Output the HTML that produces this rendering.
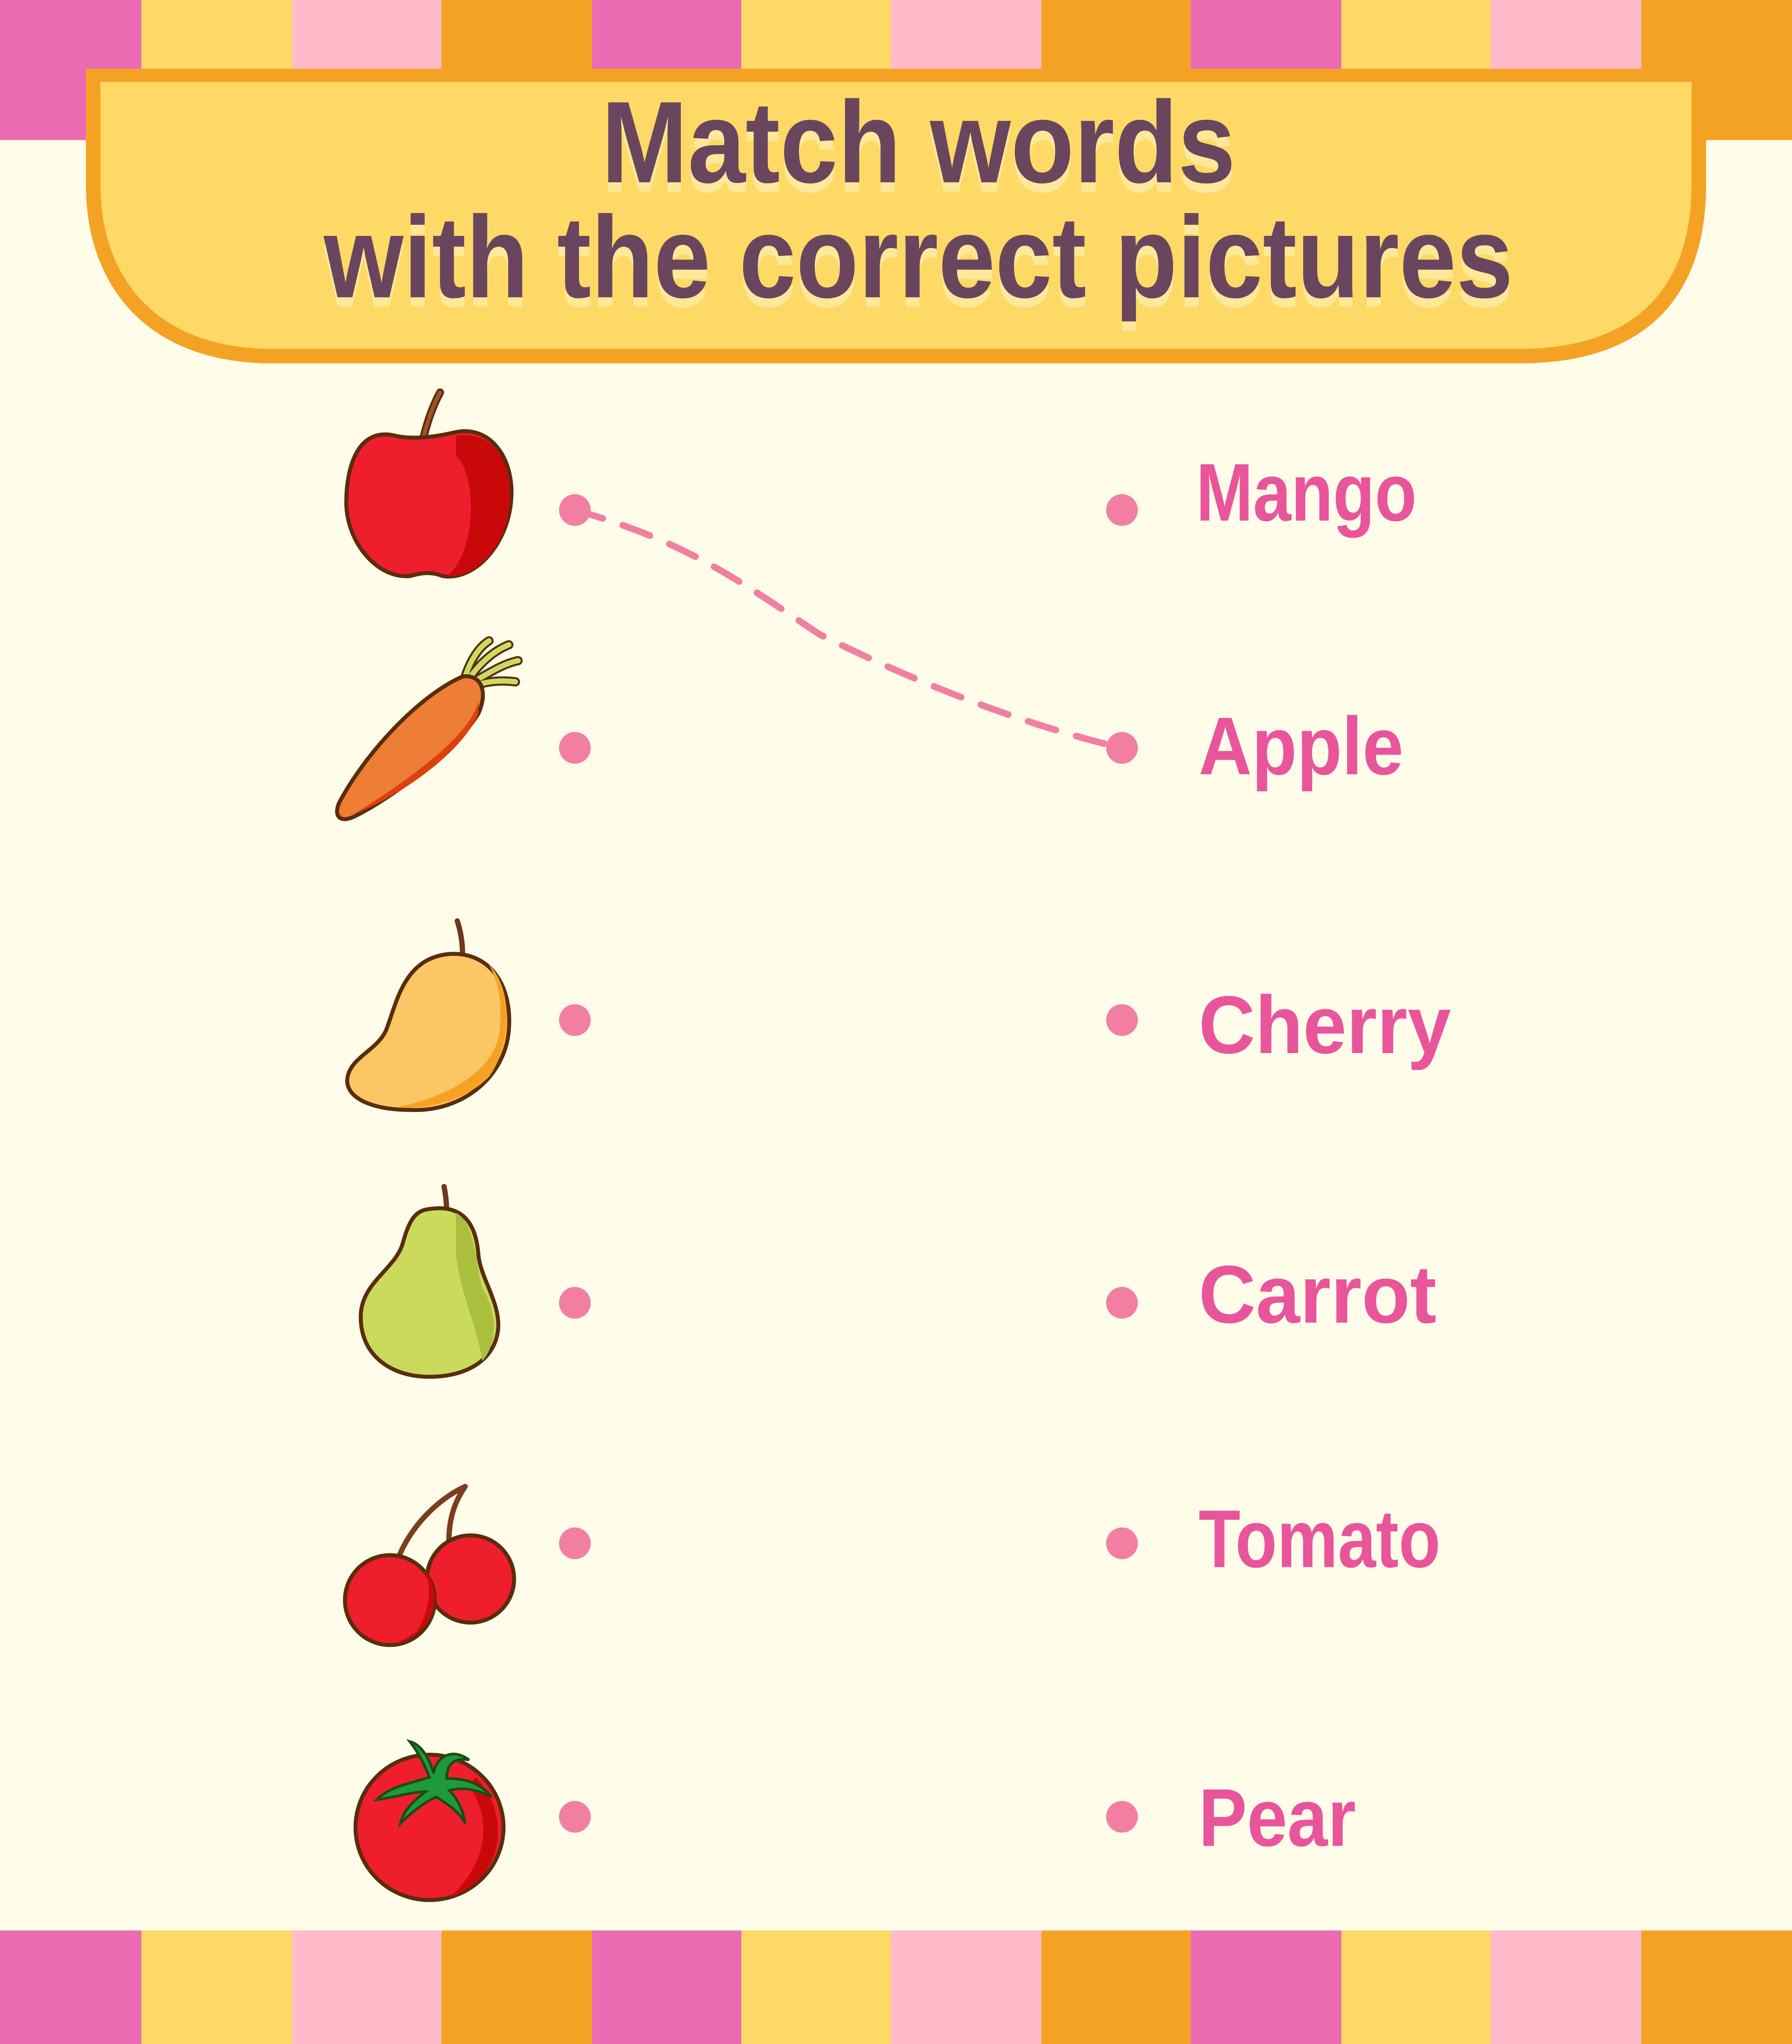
<!DOCTYPE html>
<html><head><meta charset="utf-8"><style>
html,body{margin:0;padding:0;background:#FFFCE9;width:4383px;height:5070px;overflow:hidden;}
svg{display:block}
text{font-family:"Liberation Sans",sans-serif;font-weight:bold}
</style></head><body>
<svg width="4383" height="5070" viewBox="0 0 1356 1568.6" xmlns="http://www.w3.org/2000/svg">
<rect width="1356" height="1568.6" fill="#FFFCE9"/>
<g>
<rect x="0" y="0" width="107" height="106" fill="#EA6BB2"/>
<rect x="107" y="0" width="114" height="106" fill="#FFD966"/>
<rect x="221" y="0" width="113" height="106" fill="#FFBBC9"/>
<rect x="334" y="0" width="114" height="106" fill="#F4A224"/>
<rect x="448" y="0" width="113" height="106" fill="#EA6BB2"/>
<rect x="561" y="0" width="113" height="106" fill="#FFD966"/>
<rect x="674" y="0" width="114" height="106" fill="#FFBBC9"/>
<rect x="788" y="0" width="113" height="106" fill="#F4A224"/>
<rect x="901" y="0" width="114" height="106" fill="#EA6BB2"/>
<rect x="1015" y="0" width="113" height="106" fill="#FFD966"/>
<rect x="1128" y="0" width="114" height="106" fill="#FFBBC9"/>
<rect x="1242" y="0" width="114" height="106" fill="#F4A224"/>
</g>
<g transform="translate(0,1461)">
<rect x="0" y="0" width="107" height="108" fill="#EA6BB2"/>
<rect x="107" y="0" width="114" height="108" fill="#FFD966"/>
<rect x="221" y="0" width="113" height="108" fill="#FFBBC9"/>
<rect x="334" y="0" width="114" height="108" fill="#F4A224"/>
<rect x="448" y="0" width="113" height="108" fill="#EA6BB2"/>
<rect x="561" y="0" width="113" height="108" fill="#FFD966"/>
<rect x="674" y="0" width="114" height="108" fill="#FFBBC9"/>
<rect x="788" y="0" width="113" height="108" fill="#F4A224"/>
<rect x="901" y="0" width="114" height="108" fill="#EA6BB2"/>
<rect x="1015" y="0" width="113" height="108" fill="#FFD966"/>
<rect x="1128" y="0" width="114" height="108" fill="#FFBBC9"/>
<rect x="1242" y="0" width="114" height="108" fill="#F4A224"/>
</g>
<path d="M65,52 H1291 V140 C1291,220 1250,275 1150,275 H206 C110,275 65,215 65,140 Z" fill="#F4A224"/>
<path d="M76,62 H1280 V140 C1280,210 1245,264 1150,264 H206 C118,264 76,210 76,140 Z" fill="#FFD966"/>
<g fill="#FFE89A">
<text x="455" y="145" font-size="88" textLength="480" lengthAdjust="spacingAndGlyphs">Match words</text>
<text x="245" y="232" font-size="88" textLength="900" lengthAdjust="spacingAndGlyphs">with the correct pictures</text>
</g>
<g fill="#69465E">
<text x="455" y="138" font-size="88" textLength="480" lengthAdjust="spacingAndGlyphs">Match words</text>
<text x="245" y="225" font-size="88" textLength="900" lengthAdjust="spacingAndGlyphs">with the correct pictures</text>
</g>
<path d="M435,386 C520,410 560,440 620,480 C700,520 780,550 849,566" fill="none" stroke="#F07FA0" stroke-width="5" stroke-dasharray="22 16" stroke-linecap="round"/>
<g fill="#F27FA2">
<circle cx="435" cy="386" r="12"/><circle cx="849" cy="386" r="12"/>
<circle cx="435" cy="566" r="12"/><circle cx="849" cy="566" r="12"/>
<circle cx="435" cy="772" r="12"/><circle cx="849" cy="772" r="12"/>
<circle cx="435" cy="986" r="12"/><circle cx="849" cy="986" r="12"/>
<circle cx="435" cy="1168" r="12"/><circle cx="849" cy="1168" r="12"/>
<circle cx="435" cy="1375" r="12"/><circle cx="849" cy="1375" r="12"/>
</g>
<g fill="#E9559B" font-size="62">
<text x="905" y="394" textLength="167" lengthAdjust="spacingAndGlyphs">Mango</text>
<text x="907" y="586" textLength="155" lengthAdjust="spacingAndGlyphs">Apple</text>
<text x="907" y="797" textLength="191" lengthAdjust="spacingAndGlyphs">Cherry</text>
<text x="907" y="1001" textLength="180" lengthAdjust="spacingAndGlyphs">Carrot</text>
<text x="907" y="1186" textLength="183" lengthAdjust="spacingAndGlyphs">Tomato</text>
<text x="907" y="1397" textLength="119" lengthAdjust="spacingAndGlyphs">Pear</text>
</g>
<path d="M318,342 C322,322 327,308 333,297" stroke="#5A2D0C" stroke-width="6" fill="none" stroke-linecap="round"/>
<path d="M318,342 C322,322 327,308 333,297" stroke="#A0522D" stroke-width="3" fill="none" stroke-linecap="round"/>
<path d="M300,330 C270,322 262,355 262,380 C262,410 285,438 310,436 C318,434 325,432 335,436 C360,440 386,410 387,375 C388,345 370,322 345,327 C332,330 315,333 300,330 Z" fill="#EE1E2C" stroke="#5A2D0C" stroke-width="3"/>
<path d="M345,330 C370,325 386,345 386,375 C386,410 362,438 338,436 C360,420 362,360 345,345 Z" fill="#C90909"/>
<path d="M352,512 C356,500 362,490 370,485 M356,512 C365,500 375,492 385,488 M360,515 C372,508 382,502 392,500 M362,518 C372,515 382,515 390,516" stroke="#5A2D0C" stroke-width="7" fill="none" stroke-linecap="round"/>
<path d="M352,512 C356,500 362,490 370,485 M356,512 C365,500 375,492 385,488 M360,515 C372,508 382,502 392,500 M362,518 C372,515 382,515 390,516" stroke="#CADB63" stroke-width="4" fill="none" stroke-linecap="round"/>
<path d="M350,512 C363,510 370,522 362,540 C345,568 295,605 268,618 C255,624 252,615 258,605 C280,565 320,525 350,512 Z" fill="#EE7D35" stroke="#5A2D0C" stroke-width="3"/>
<path d="M362,530 C358,555 310,590 268,616 C300,604 350,570 362,540 Z" fill="#DD3F10"/>
<path d="M350,722 C350,712 348,703 346,697" stroke="#6B3A1A" stroke-width="4" fill="none" stroke-linecap="round"/>
<path d="M340,722 C370,720 388,745 385,780 C382,815 350,842 310,840 C280,840 260,830 263,815 C266,800 285,795 292,780 C300,760 305,725 340,722 Z" fill="#FCC664" stroke="#5A2D0C" stroke-width="3"/>
<path d="M370,730 C388,748 388,790 370,815 C350,835 320,840 300,838 C340,830 375,810 378,780 C380,760 378,745 370,730 Z" fill="#F5A224"/>
<path d="M338,918 C338,910 337,903 336,898" stroke="#6B3A1A" stroke-width="4" fill="none" stroke-linecap="round"/>
<path d="M325,915 C345,912 360,920 362,950 C364,968 378,985 377,1005 C375,1030 352,1042 325,1042 C295,1042 272,1025 273,995 C274,970 300,960 305,940 C310,922 315,916 325,915 Z" fill="#CBDA5D" stroke="#5A2D0C" stroke-width="3"/>
<path d="M345,918 C360,925 360,960 365,975 C375,990 378,1015 365,1030 C360,1000 350,985 345,950 Z" fill="#A9BF3D"/>
<path d="M298,1190 C305,1160 330,1135 352,1125 M340,1175 C338,1150 345,1135 352,1125" stroke="#7A3E1C" stroke-width="4" fill="none" stroke-linecap="round"/>
<circle cx="356" cy="1195" r="33" fill="#EE1E2C" stroke="#5A2D0C" stroke-width="3"/>
<circle cx="295" cy="1211" r="34" fill="#EE1E2C" stroke="#5A2D0C" stroke-width="3"/>
<path d="M315,1235 C325,1220 328,1200 320,1188 C335,1200 333,1235 300,1244 Z" fill="#C90909"/>
<ellipse cx="325" cy="1383" rx="56" ry="55" fill="#EE1E2C" stroke="#5A2D0C" stroke-width="3"/>
<path d="M360,1345 C385,1370 385,1420 340,1436 C370,1410 372,1375 355,1352 Z" fill="#C90909"/>
<path d="M325,1345 C310,1350 295,1352 285,1362 C300,1360 312,1356 322,1356 C310,1365 305,1372 303,1380 C315,1368 325,1362 330,1360 C340,1366 348,1372 352,1380 C350,1368 345,1360 340,1355 C352,1352 362,1355 372,1360 C362,1348 350,1346 338,1346 C338,1334 345,1330 355,1332 C342,1322 330,1330 328,1342 C325,1330 318,1320 310,1318 C318,1328 322,1338 325,1345 Z" fill="#1E9A3A" stroke="#1D4A16" stroke-width="2"/>
</svg>
</body></html>
